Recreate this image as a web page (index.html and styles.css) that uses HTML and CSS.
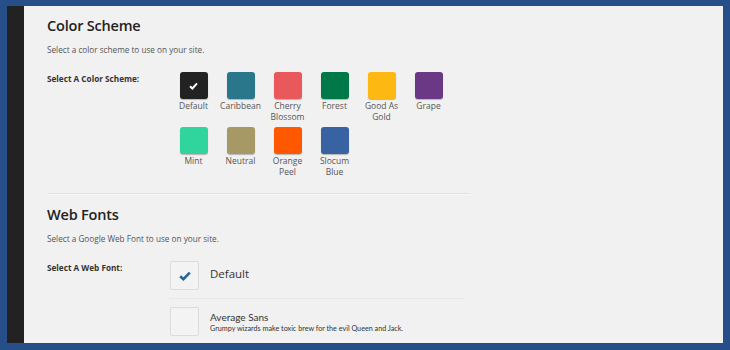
FILE: index.html
```html
<!DOCTYPE html>
<html lang="en">
<head>
  <meta charset="UTF-8">
  <meta name="viewport" content="width=device-width, initial-scale=1.0">
  <title>Theme Options</title>
  <link rel="stylesheet" href="styles.css">
</head>
<body>
  <div class="frame">
    <div class="sidebar"></div>
    <div class="panel">
      <section class="section">
        <h2>Color Scheme</h2>
        <p class="desc">Select a color scheme to use on your site.</p>
        <div class="row">
          <div class="label">Select A Color Scheme:</div>
          <div class="swatches">
            <div class="swatch"><span class="chip selected" style="background:#222222"><svg width="9" height="8" viewBox="0 0 9 8"><path d="M1 4.2 L3.4 6.5 L8 1.3" fill="none" stroke="#fff" stroke-width="2"/></svg></span>Default</div>
            <div class="swatch"><span class="chip" style="background:#2a778c"></span>Caribbean</div>
            <div class="swatch"><span class="chip" style="background:#e9585b"></span>Cherry Blossom</div>
            <div class="swatch"><span class="chip" style="background:#007848"></span>Forest</div>
            <div class="swatch"><span class="chip" style="background:#fdb812"></span>Good As Gold</div>
            <div class="swatch"><span class="chip" style="background:#6b3886"></span>Grape</div>
            <div class="swatch"><span class="chip" style="background:#2fd59c"></span>Mint</div>
            <div class="swatch"><span class="chip" style="background:#a69965"></span>Neutral</div>
            <div class="swatch"><span class="chip" style="background:#ff5800"></span>Orange Peel</div>
            <div class="swatch"><span class="chip" style="background:#3862a1"></span>Slocum Blue</div>
          </div>
        </div>
      </section>

      <hr class="divider">

      <section class="section">
        <h2>Web Fonts</h2>
        <p class="desc">Select a Google Web Font to use on your site.</p>
        <div class="row">
          <div class="label">Select A Web Font:</div>
          <div class="fonts">
            <div class="font-option">
              <span class="box"><svg width="12" height="10" viewBox="0 0 12 10"><path d="M1.2 5.2 L4.4 8.2 L10.8 1.6" fill="none" stroke="#1f6a9d" stroke-width="2.6"/></svg></span>
              <div class="font-name big">Default</div>
            </div>
            <div class="font-option">
              <span class="box"></span>
              <div>
                <div class="font-name">Average Sans</div>
                <div class="sample">Grumpy wizards make toxic brew for the evil Queen and Jack.</div>
              </div>
            </div>
          </div>
        </div>
      </section>
    </div>
  </div>
</body>
</html>
```

FILE: styles.css
```css
html, body {
  margin: 0;
  height: 100%;
}
body {
  background: #264f89;
  font-family: 'Open Sans', sans-serif;
  color: #333;
}
.frame {
  display: flex;
  height: 350px;
  box-sizing: border-box;
  padding: 6px 7px 7px 7px;
  overflow: hidden;
}
.sidebar {
  width: 17px;
  background: #222222;
}
.panel {
  flex: 1;
  background: #f1f1f1;
  padding: 9px 0 0 23px;
  overflow: hidden;
}
.section h2 {
  margin: 0;
  font-size: 14.5px;
  font-weight: 600;
  letter-spacing: -0.2px;
  color: #222;
  line-height: 22px;
}
.desc {
  margin: 7px 0 0;
  font-size: 8.2px;
  color: #555;
  line-height: 12px;
}
.row {
  display: flex;
  margin-top: 16px;
}
.label {
  width: 123px;
  font-size: 8.2px;
  font-weight: 700;
  color: #333;
  line-height: 12px;
  padding-top: 1px;
}
.swatches {
  display: grid;
  grid-template-columns: repeat(6, 47px);
  row-gap: 5px;
}
.swatch {
  display: flex;
  flex-direction: column;
  align-items: center;
  text-align: center;
  font-size: 8.5px;
  line-height: 11px;
  color: #555;
  height: 50px;
  padding: 0 3px;
}
.chip {
  width: 28px;
  height: 27px;
  border-radius: 3px;
  margin-bottom: 1px;
  box-shadow: 0 1px 1px rgba(0, 0, 0, 0.25);
  display: flex;
  align-items: center;
  justify-content: center;
}
.divider {
  border: 0;
  border-top: 1px solid #e2e2e2;
  border-bottom: 1px solid #f8f8f8;
  width: 423px;
  margin: 16px 0 9px;
}
.fonts {
  width: 293px;
}
.font-option {
  display: flex;
  align-items: flex-start;
  padding-bottom: 8px;
}
.font-option + .font-option {
  border-top: 1px dotted #dcdcdc;
  padding-top: 8px;
}
.box {
  width: 27px;
  height: 27px;
  border: 1px solid #dcdcdc;
  border-radius: 2px;
  background: #f3f3f3;
  display: flex;
  align-items: center;
  justify-content: center;
  margin-right: 11px;
  flex-shrink: 0;
}
.font-name {
  font-family: 'Lato', sans-serif;
  font-size: 10px;
  color: #333;
  line-height: 14px;
  margin-top: 3px;
}
.font-name.big {
  font-family: 'Open Sans', sans-serif;
  font-size: 11.5px;
  margin-top: 6px;
}
.sample {
  font-family: 'Lato', sans-serif;
  font-size: 7.2px;
  color: #333;
  line-height: 10px;
}
```
